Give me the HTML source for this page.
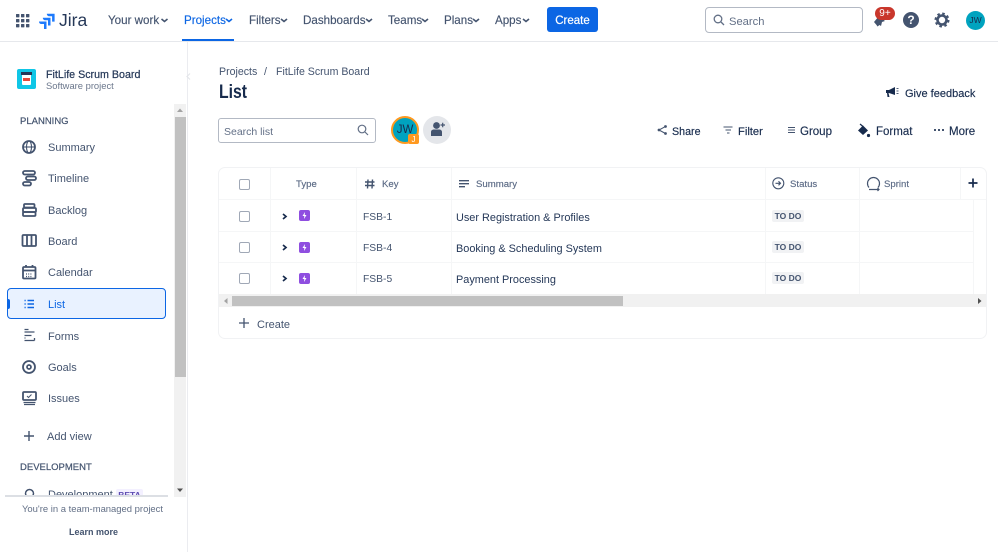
<!DOCTYPE html>
<html><head><meta charset="utf-8"><title>List</title>
<style>
html,body{margin:0;padding:0;width:998px;height:552px;overflow:hidden;background:#fff}
body{position:relative;font-family:"Liberation Sans","Noto Sans CJK JP",sans-serif;color:#44546f;font-size:12px}
.t{position:absolute;white-space:nowrap;line-height:16px}
.a{position:absolute;box-sizing:border-box}
svg{position:absolute;overflow:visible}
.n{font-size:11.6px;color:#44546f;top:13px;-webkit-text-stroke:.15px #44546f}
.s{font-size:11px;color:#44546f;left:48px}
.h{font-size:9.6px;color:#5b6a85;top:177px;-webkit-text-stroke:.15px #5b6a85}
.c{font-size:10.9px;color:#253858}
.k{font-size:10.3px;color:#44546f;left:363px}
.cb{position:absolute;left:239px;width:11px;height:11px;border:1.200px solid #a0a8b6;border-radius:2px;box-sizing:border-box}
.to{position:absolute;left:772px;width:32px;height:12px;background:#f1f2f4;border-radius:2px;font-size:8.500px;font-weight:bold;color:#44546f;line-height:12px;text-align:center}
.b{color:#172b4d;top:124px;-webkit-text-stroke:.15px #172b4d}
.line{position:absolute;background:#f5f6f7}
</style></head><body>
<!-- top nav -->
<div class="a" style="left:0;top:41px;width:998px;height:1px;background:#e6e8ec"></div>
<svg style="left:16px;top:14px" width="13" height="13" fill="#44546f"><rect x="0" y="0" width="3.400" height="3.400" rx=".5"/><rect x="5" y="0" width="3.400" height="3.400" rx=".5"/><rect x="10" y="0" width="3.400" height="3.400" rx=".5"/><rect x="0" y="5" width="3.400" height="3.400" rx=".5"/><rect x="5" y="5" width="3.400" height="3.400" rx=".5"/><rect x="10" y="5" width="3.400" height="3.400" rx=".5"/><rect x="0" y="10" width="3.400" height="3.400" rx=".5"/><rect x="5" y="10" width="3.400" height="3.400" rx=".5"/><rect x="10" y="10" width="3.400" height="3.400" rx=".5"/></svg>
<svg style="left:39px;top:13px" width="16" height="16" viewBox="0 0 16 16" fill="#1d7afc"><path d="M0 8.500h7.500v7.500H5V11H2.600C1 11 0 10 0 8.500z"/><path d="M3.800 4.700h7.700v7.800H9V7.200H6.400C5 7.200 3.800 6.200 3.800 4.700z"/><path d="M7.800 .8h7.800v7.800h-2.500V3.300h-2.700C9 3.300 7.800 2.300 7.800 .8z"/></svg>
<div class="t" style="left:59px;top:9px;font-size:17.500px;line-height:22px;color:#253858">Jira</div>
<div class="t n" style="left:108px">Your work</div>
<div class="t n" style="left:184px;color:#0c66e4;-webkit-text-stroke-color:#0c66e4">Projects</div>
<div class="t n" style="left:249px">Filters</div>
<div class="t n" style="left:303px">Dashboards</div>
<div class="t n" style="left:388px">Teams</div>
<div class="t n" style="left:444px">Plans</div>
<div class="t n" style="left:495px">Apps</div>
<svg style="left:0;top:0" width="560" height="30" fill="none" stroke="#44546f" stroke-width="1.600"><path d="M161.500 19l3 2.500 3-2.500"/><path d="M226 19l3 2.500 3-2.500" stroke="#0c66e4"/><path d="M281 19l3 2.500 3-2.500"/><path d="M366 19l3 2.500 3-2.500"/><path d="M422 19l3 2.500 3-2.500"/><path d="M473 19l3 2.500 3-2.500"/><path d="M523 19l3 2.500 3-2.500"/></svg>
<div class="a" style="left:182px;top:39px;width:52px;height:2px;background:#0c66e4"></div>
<div class="a" style="left:547px;top:7px;width:51px;height:25px;background:#0c66e4;border-radius:3px;color:#fff;font-size:11.500px;-webkit-text-stroke:.2px #fff;line-height:29px;text-align:center">Create</div>
<div class="a" style="left:705px;top:7px;width:158px;height:26px;border:1px solid #b3b9c4;border-radius:4px"></div>
<svg style="left:713px;top:14px" width="12" height="12" fill="none" stroke="#626f86" stroke-width="1.300"><circle cx="5" cy="5" r="3.800"/><path d="M8 8l3 3"/></svg>
<div class="t" style="left:729px;top:14px;font-size:11.200px;color:#626f86">Search</div>
<svg style="left:873px;top:15px" width="14" height="12" viewBox="0 0 14 12" fill="#44546f"><path d="M1 7l5-6 6 5-3 1-1 4-1.500-1-2 1.500-1-1.500z"/></svg>
<div class="a" style="left:875px;top:7px;width:20px;height:13px;background:#c9372c;border-radius:7px;color:#fff;font-size:10px;line-height:13px;text-align:center">9+</div>
<div class="a" style="left:903px;top:12px;width:16px;height:16px;border-radius:50%;background:#44546f;color:#fff;font-size:12px;font-weight:bold;line-height:16px;text-align:center">?</div>
<svg style="left:934px;top:12px" width="16" height="16" viewBox="0 0 16 16" fill="none"><circle cx="8" cy="8" r="4.500" stroke="#44546f" stroke-width="2.600"/><circle cx="8" cy="8" r="6.300" stroke="#44546f" stroke-width="2.400" stroke-dasharray="2.500 2.450"/></svg>
<div class="a" style="left:966px;top:11px;width:19px;height:19px;border-radius:50%;background:#00a3bf;color:#172b4d;font-size:8.500px;line-height:19px;text-align:center">JW</div>

<!-- sidebar -->
<div class="a" style="left:187px;top:42px;width:1px;height:510px;background:#ebecf0"></div>
<svg style="left:186px;top:73px" width="5" height="7" fill="none" stroke="#e4e6ea" stroke-width="1.200"><path d="M4 0.500L1 3.500l3 3"/></svg>
<div class="a" style="left:17px;top:69px;width:19px;height:20px;border-radius:2px;background:#0fc6e6"></div>
<div class="a" style="left:22px;top:73px;width:9px;height:12px;background:#fff;border-radius:1px"></div>
<div class="a" style="left:21px;top:72px;width:11px;height:3px;background:#253858"></div>
<div class="a" style="left:23px;top:78px;width:7px;height:3px;background:#e5493a"></div>
<div class="t" style="left:46px;top:67px;font-size:10.700px;color:#253858;-webkit-text-stroke:.2px #253858">FitLife Scrum Board</div>
<div class="t" style="left:46px;top:78px;font-size:9.400px;color:#6b778c">Software project</div>

<div class="t" style="left:20px;top:114px;font-size:9.500px;color:#44546f;-webkit-text-stroke:.2px #44546f">PLANNING</div>
<div class="t s" style="top:140px">Summary</div>
<div class="t s" style="top:171px">Timeline</div>
<div class="t s" style="top:203px">Backlog</div>
<div class="t s" style="top:234px">Board</div>
<div class="t s" style="top:265px">Calendar</div>
<div class="a" style="left:7px;top:288px;width:159px;height:31px;background:#e9f2ff;border:1.500px solid #0c66e4;border-radius:4px"></div>
<div class="a" style="left:7px;top:299px;width:3px;height:10px;background:#0c66e4;border-radius:0 2px 2px 0"></div>
<div class="t s" style="top:297px;color:#0c66e4">List</div>
<div class="t s" style="top:329px">Forms</div>
<div class="t s" style="top:360px">Goals</div>
<div class="t s" style="top:391px">Issues</div>
<div class="t s" style="left:47px;top:429px">Add view</div>
<div class="t" style="left:20px;top:460px;font-size:9.500px;color:#44546f;-webkit-text-stroke:.2px #44546f">DEVELOPMENT</div>

<svg style="left:0;top:0" width="60" height="500" fill="none" stroke="#44546f" stroke-width="1.800">
<circle cx="29" cy="147" r="6"/><ellipse cx="29" cy="147" rx="2.500" ry="6" stroke-width="1.100"/><path d="M23 147h12" stroke-width="1.100"/>
<rect x="23" y="171" width="12" height="3.500" rx="1.700"/><rect x="26" y="176.500" width="10" height="3.500" rx="1.700"/><rect x="23" y="182" width="8" height="3.500" rx="1.700"/>
<rect x="24" y="204" width="10.500" height="3.500" rx="1"/><rect x="23" y="208" width="13" height="4" rx="1"/><rect x="23" y="212" width="12.500" height="4" rx="1"/>
<rect x="22.500" y="235" width="13.500" height="11" rx="1"/><path d="M27 235v11M31.500 235v11"/>
<rect x="23" y="267" width="12.500" height="11.500" rx="1"/><path d="M23 270.500h12.500M26 265v2.500M32.500 265v2.500" stroke-width="1.800"/><path d="M26 274h6.500M26 276.500h6.500" stroke-dasharray="1 1.200" stroke-width="1.200"/>
<path d="M24.500 300.500h1.200M24.500 304h1.200M24.500 307.500h1.200M27.500 300.500h6.500M27.500 304h6.500M27.500 307.500h6.500" stroke="#0c66e4" stroke-width="1.400"/>
<path d="M24.500 329.500h4M24.500 332h10M24.500 335.500h7M24.500 338h1M24.500 340.500h10M34.500 338v2.500" stroke-width="1.300"/>
<circle cx="29" cy="367" r="6"/><circle cx="29" cy="367" r="2" stroke-width="1.700"/>
<rect x="23" y="392" width="13" height="8" rx="1"/><path d="M23.500 402.500h12M24 404.500h11" stroke-width="1.300"/><path d="M27 396l1.500 1.500 3-3" stroke-width="1"/>
<path d="M29 431v10M24 436h10" stroke-width="1.400"/>
</svg>

<div class="t s" style="top:487px">Development</div>
<div class="a" style="left:116px;top:489px;width:27px;height:12px;background:#f3f0ff;border-radius:2px;font-size:8.500px;font-weight:bold;color:#5e4db2;text-align:center;line-height:12px">BETA</div>
<svg style="left:24px;top:488px" width="12" height="12" fill="none" stroke="#44546f" stroke-width="1.500"><circle cx="5.500" cy="5.500" r="4"/></svg>
<div class="a" style="left:0;top:497px;width:174px;height:55px;background:#fff"></div>
<div class="a" style="left:5px;top:495px;width:163px;height:2px;background:#dcdfe4"></div>
<div class="t" style="left:22px;top:502px;font-size:9.450px;color:#626f86">You're in a team-managed project</div>
<div class="t" style="left:69px;top:524px;font-size:9px;font-weight:bold;color:#44546f">Learn more</div>
<div class="a" style="left:174px;top:104px;width:12px;height:393px;background:#f1f1f1"></div>
<div class="a" style="left:175px;top:117px;width:11px;height:260px;background:#c1c1c1"></div>
<svg style="left:177px;top:108px" width="7" height="5" fill="#a3a3a3"><path d="M0 4l3-3.500L6 4z"/></svg>
<svg style="left:177px;top:488px" width="7" height="5" fill="#505050"><path d="M0 0.500h6L3 4z"/></svg>

<!-- header -->
<div class="t" style="left:219px;top:64px;font-size:10.600px;color:#44546f">Projects</div>
<div class="t" style="left:264px;top:64px;font-size:10.600px;color:#44546f">/</div>
<div class="t" style="left:276px;top:64px;font-size:10.600px;color:#44546f">FitLife Scrum Board</div>
<div class="t" style="left:219px;top:81px;font-size:19px;line-height:24px;font-weight:bold;color:#172b4d;transform:scaleX(.83);transform-origin:left">List</div>
<svg style="left:886px;top:87px" width="14" height="11" viewBox="0 0 14 11" fill="#172b4d"><path d="M0 3h3l6-3v8L3 6H2.500l1 4H1.500L1 6H0z"/><path d="M10.500 1.500h2M10.500 4h2M10.500 6.500h2" stroke="#172b4d" stroke-width="0.800"/></svg>
<div class="t" style="left:905px;top:86px;font-size:11px;color:#172b4d;-webkit-text-stroke:.15px #172b4d">Give feedback</div>

<div class="a" style="left:218px;top:118px;width:158px;height:25px;border:1px solid #b3b9c4;border-radius:3px"></div>
<div class="t" style="left:224px;top:124px;font-size:10.500px;color:#626f86">Search list</div>
<svg style="left:357px;top:124px" width="12" height="12" fill="none" stroke="#626f86" stroke-width="1.200"><circle cx="5" cy="5" r="3.800"/><path d="M8 8l3 3"/></svg>
<div class="a" style="left:391px;top:116px;width:28px;height:28px;border-radius:50%;background:#00a3bf;border:2px solid #ff991f;color:#172b4d;font-size:11.500px;line-height:24px;text-align:center">JW</div>
<div class="a" style="left:408px;top:134px;width:11px;height:10px;background:#ff991f;border-radius:2px;color:#fff;font-size:8px;line-height:11px;text-align:center">J</div>
<div class="a" style="left:423px;top:116px;width:28px;height:28px;border-radius:50%;background:#e4e6ea"></div>
<svg style="left:431px;top:122px" width="15" height="15" fill="#44546f"><circle cx="5.500" cy="3.500" r="3.400"/><path d="M0 14V10C0 8.200 1.500 7.500 3 7.500h5C9.800 7.500 11 8.500 11 10v4z"/><path d="M9.500 3h4.500M11.700 .8v4.400" stroke="#44546f" stroke-width="1.200" fill="none"/></svg>

<svg style="left:657px;top:125px" width="11" height="11" fill="#44546f" stroke="#44546f"><circle cx="2" cy="5" r="1" stroke-width=".8"/><circle cx="8.500" cy="1.500" r="1" stroke-width=".8"/><circle cx="8.500" cy="8.500" r="1" stroke-width=".8"/><path d="M2 5l6.500-3.500M2 5l6.500 3.500" fill="none"/></svg>
<div class="t b" style="left:672px;font-size:10.700px">Share</div>
<svg style="left:723px;top:126px" width="11" height="9" fill="none" stroke="#44546f" stroke-width="1.100"><path d="M0.500 1h9M2.500 4h5.500M4 7h2.500"/></svg>
<div class="t b" style="left:738px;font-size:11.200px">Filter</div>
<svg style="left:788px;top:127px" width="7" height="7" fill="none" stroke="#44546f" stroke-width="1.100"><path d="M0 .5h7M0 3h7M0 5.500h7"/></svg>
<div class="t b" style="left:800px;font-size:11.500px">Group</div>
<svg style="left:857px;top:123px" width="13" height="15" viewBox="0 0 13 15" fill="#172b4d"><path d="M6 2.500L11 7.500 6 12 1 7.500z"/><circle cx="11.500" cy="12.500" r="1.600"/><path d="M3 1l3 2.500" stroke="#172b4d" stroke-width="1.200"/></svg>
<div class="t b" style="left:876px;font-size:11.500px">Format</div>
<svg style="left:934px;top:129px" width="11" height="3" fill="#44546f"><rect x="0" y="0" width="2" height="2"/><rect x="4" y="0" width="2" height="2"/><rect x="8" y="0" width="2" height="2"/></svg>
<div class="t b" style="left:949px;font-size:11.500px">More</div>

<!-- table -->
<div class="a" style="left:218px;top:167px;width:769px;height:172px;border:1px solid #f1f2f4;border-radius:7px"></div>
<div class="line" style="left:219px;top:199px;width:767px;height:1px"></div>
<div class="line" style="left:219px;top:231px;width:755px;height:1px"></div>
<div class="line" style="left:219px;top:262px;width:755px;height:1px"></div>
<div class="line" style="left:270px;top:168px;width:1px;height:126px"></div>
<div class="line" style="left:356px;top:168px;width:1px;height:126px"></div>
<div class="line" style="left:451px;top:168px;width:1px;height:126px"></div>
<div class="line" style="left:765px;top:168px;width:1px;height:126px"></div>
<div class="line" style="left:859px;top:168px;width:1px;height:126px"></div>
<div class="line" style="left:960px;top:168px;width:1px;height:32px"></div>
<div class="line" style="left:973px;top:200px;width:1px;height:94px"></div>
<div class="cb" style="top:179px"></div><div class="cb" style="top:211px"></div><div class="cb" style="top:242px"></div><div class="cb" style="top:273px"></div>
<div class="t h" style="left:296px">Type</div>
<svg style="left:365px;top:179px" width="10" height="10" fill="none" stroke="#44546f" stroke-width="1.400"><path d="M3 .5L2.500 9.500M7.500 .5L7 9.500M0 3h9.500M0 6.500h9.500"/></svg>
<div class="t h" style="left:382px">Key</div>
<svg style="left:459px;top:180px" width="10" height="8" fill="none" stroke="#44546f" stroke-width="1.400"><path d="M0 .7h10M0 3.700h10M0 6.700h6"/></svg>
<div class="t h" style="left:476px">Summary</div>
<svg style="left:772px;top:177px" width="13" height="13" fill="none" stroke="#44546f" stroke-width="1.100"><circle cx="6.300" cy="6.300" r="5.500"/><path d="M3.500 6.300h5M6.500 4.300l2 2-2 2"/></svg>
<div class="t h" style="left:790px">Status</div>
<svg style="left:866px;top:177px" width="14" height="15" fill="none" stroke="#44546f" stroke-width="1.200"><path d="M12 10.500A6 6 0 1 0 3 10.500M3 12.500h10M11.500 11l1.500 1.500-1.500 1.500"/></svg>
<div class="t h" style="left:884px">Sprint</div>
<svg style="left:968px;top:178px" width="11" height="11" fill="none" stroke="#172b4d" stroke-width="1.700"><path d="M5 0.500v9M0.500 5h9"/></svg>

<svg style="left:282px;top:213px" width="6" height="70" fill="none" stroke="#172b4d" stroke-width="1.700"><path d="M1 1l3 2.500-3 2.500M1 32l3 2.500-3 2.500M1 63l3 2.500-3 2.500"/></svg>
<div class="a" style="left:299px;top:210px;width:11px;height:11px;background:#8f4ee0;border-radius:2px"></div>
<div class="a" style="left:299px;top:242px;width:11px;height:11px;background:#8f4ee0;border-radius:2px"></div>
<div class="a" style="left:299px;top:273px;width:11px;height:11px;background:#8f4ee0;border-radius:2px"></div>
<svg style="left:299px;top:210px" width="11" height="74" fill="#fff"><path d="M6 2L3.500 6H5.300L5 9l2.500-4H5.700z"/><path d="M6 34L3.500 38H5.300L5 41l2.500-4H5.700z"/><path d="M6 65L3.500 69H5.300L5 72l2.500-4H5.700z"/></svg>
<div class="t k" style="top:210px">FSB-1</div>
<div class="t k" style="top:241px">FSB-4</div>
<div class="t k" style="top:272px">FSB-5</div>
<div class="t c" style="left:456px;top:210px">User Registration &amp; Profiles</div>
<div class="t c" style="left:456px;top:241px">Booking &amp; Scheduling System</div>
<div class="t c" style="left:456px;top:272px">Payment Processing</div>
<div class="to" style="top:210px">TO DO</div>
<div class="to" style="top:241px">TO DO</div>
<div class="to" style="top:272px">TO DO</div>

<div class="a" style="left:219px;top:294px;width:767px;height:13px;background:#f1f1f1"></div>
<div class="a" style="left:232px;top:296px;width:391px;height:10px;background:#c1c1c1"></div>
<svg style="left:224px;top:298px" width="4" height="6" fill="#a3a3a3"><path d="M3.500 0v6L0 3z"/></svg>
<svg style="left:978px;top:298px" width="4" height="6" fill="#505050"><path d="M0 0v6l3.500-3z"/></svg>
<svg style="left:239px;top:318px" width="10" height="10" fill="none" stroke="#44546f" stroke-width="1.300"><path d="M5 0v10M0 5h10"/></svg>
<div class="t" style="left:257px;top:317px;font-size:11px;color:#44546f">Create</div>
</body></html>
